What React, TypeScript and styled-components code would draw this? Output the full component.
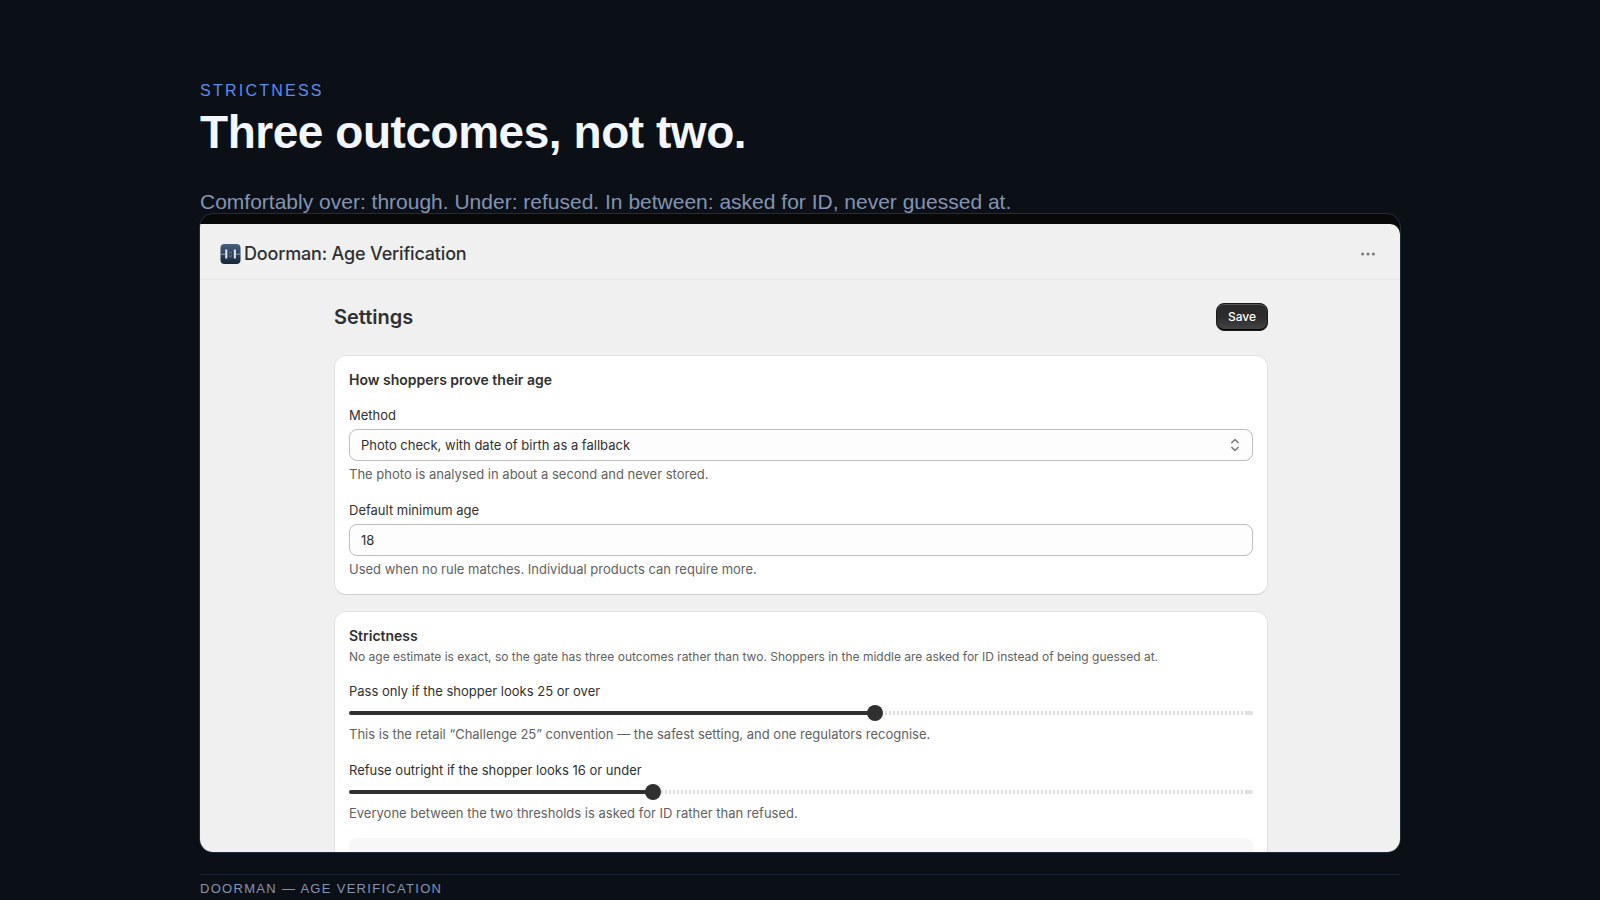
import React, { useId, useState } from "react";
import styled, { createGlobalStyle } from "styled-components";

const GlobalStyle = createGlobalStyle`
  *, *::before, *::after { box-sizing: border-box; }
  body { margin: 0; background: #0b1017; }
`;

const Slide = styled.main`
  display: flex;
  flex-direction: column;
  height: 100vh;
  padding: 81px 12.5% 0;
  overflow: hidden;
  background: #0b1017;
  font-family: "Liberation Sans", Helvetica, Arial, sans-serif;
`;

const Eyebrow = styled.p`
  margin: 0;
  color: #5b8def;
  font-size: 16px;
  line-height: 20px;
  letter-spacing: 0.14em;
  text-transform: uppercase;
`;

const Headline = styled.h1`
  margin: 3px 0 0;
  color: #f3f6fc;
  font-size: 46px;
  line-height: 56px;
  font-weight: 700;
  letter-spacing: -0.01em;
`;

const Lede = styled.p`
  margin: 30px 0 0;
  color: #8494b2;
  font-size: 21px;
  line-height: 23px;
  white-space: nowrap;
`;

const Frame = styled.section`
  display: flex;
  flex-direction: column;
  flex: 1 1 0;
  min-height: 0;
  margin: 0 -1px;
  padding-top: 10px;
  overflow: hidden;
  border: 1px solid #212c3c;
  border-radius: 14px;
  background: #080808;
`;

const Admin = styled.div`
  flex: 1;
  min-height: 0;
  overflow: hidden;
  border-radius: 0 10px 0 0;
  background: #f0f0f0;
  color: #303030;
  font-family: Inter, sans-serif;
`;

const AppBar = styled.header`
  display: flex;
  align-items: center;
  gap: 3px;
  height: 56px;
  padding: 4px 20px 0;
  border-bottom: 1px solid #e8e8e8;
`;

const AppName = styled.h2`
  flex: 1;
  margin: 0;
  font-size: 18px;
  line-height: 24px;
  font-weight: 500;
  letter-spacing: -0.01em;
`;

const MoreButton = styled.button`
  display: flex;
  padding: 4px;
  border: 0;
  background: none;
  cursor: pointer;
`;

const Page = styled.div`
  padding: 23px 132px 0 134px;
`;

const PageHead = styled.div`
  display: flex;
  align-items: center;
  justify-content: space-between;
  height: 28px;
  margin-bottom: 24px;
`;

const PageTitle = styled.h3`
  margin: 0;
  font-size: 20px;
  line-height: 28px;
  font-weight: 600;
`;

const SaveButton = styled.button`
  height: 28px;
  padding: 0 11px;
  border: 1px solid #1a1a1a;
  border-radius: 8px;
  background: linear-gradient(#2b2b2b 50%, #454545);
  box-shadow: inset 0 1px 0 #555, inset 0 -1px 0 #000;
  color: #fff;
  font: 500 12px/16px Inter, sans-serif;
  cursor: pointer;
`;

const Card = styled.section`
  margin-bottom: 16px;
  padding: 15px 14px;
  border: 1px solid #e2e2e2;
  border-bottom-color: #cfcfcf;
  border-radius: 12px;
  background: #fff;
`;

const CardTitle = styled.h4`
  margin: 0;
  font-size: 14px;
  line-height: 18px;
  font-weight: 600;
`;

const CardText = styled.p`
  margin: 4px 0 0;
  color: #616161;
  font-size: 12px;
  line-height: 16px;
`;

const Field = styled.div`
  display: flex;
  flex-direction: column;
  margin-top: 16px;
`;

const Label = styled.label`
  margin-bottom: 4px;
  font-size: 13px;
  line-height: 20px;
`;

const Hint = styled.p`
  margin: 3px 0 0;
  color: #616161;
  font-size: 13px;
  line-height: 20px;
`;

const control = `
  display: block;
  width: 100%;
  height: 32px;
  padding: 0 11px;
  border: 1px solid #bdbdbd;
  border-radius: 8px;
  background: #fdfdfd;
  color: #303030;
  font: 400 13px/20px Inter, sans-serif;
`;

const TextInput = styled.input`${control}`;

const SelectBox = styled.div`
  display: grid;
  align-items: center;
  > * { grid-area: 1 / 1; }
  > svg { justify-self: end; margin-right: 13px; pointer-events: none; }
`;

const Select = styled.select`
  ${control}
  appearance: none;
`;

const Range = styled.input<{ $fill: number }>`
  appearance: none;
  display: block;
  width: 100%;
  height: 16px;
  margin: 0;
  background: none;

  &::-webkit-slider-runnable-track {
    height: 4px;
    border-radius: 2px;
    background:
      linear-gradient(#303030, #303030) 0 0 / ${(p) => p.$fill}% 100% no-repeat,
      linear-gradient(#e0e0e0, #e0e0e0) 100% 0 / 6px 100% no-repeat,
      repeating-linear-gradient(90deg, #e0e0e0 0 2px, #fff 2px 4px);
  }

  &::-webkit-slider-thumb {
    appearance: none;
    width: 16px;
    height: 16px;
    margin-top: -6px;
    border-radius: 50%;
    background: #303030;
  }
`;

const Preview = styled.div`
  height: 120px;
  margin-top: 15px;
  border-radius: 8px;
  background: #f7f7f7;
`;

const Footer = styled.footer`
  height: 26px;
  margin-top: 21px;
  padding-top: 4px;
  border-top: 1px solid #1b2431;
  color: #8494b2;
  font-size: 13px;
  line-height: 20px;
  letter-spacing: 0.1em;
  text-transform: uppercase;
`;

const AppIcon = () => (
  <svg width="21" height="20" viewBox="0 0 21 20" aria-hidden="true">
    <defs>
      <linearGradient id="night" x1="0" y1="0" x2="0" y2="1">
        <stop offset="0" stopColor="#48617f" />
        <stop offset="0.5" stopColor="#2d405a" />
        <stop offset="1" stopColor="#18253a" />
      </linearGradient>
      <linearGradient id="post" x1="0" y1="0" x2="1" y2="0">
        <stop offset="0" stopColor="#8796a6" />
        <stop offset="0.5" stopColor="#f1f4f7" />
        <stop offset="1" stopColor="#b5c0cb" />
      </linearGradient>
    </defs>
    <rect width="20" height="20" x="0.5" rx="4" fill="url(#night)" />
    <path d="M0.5 10.2H5M16 10.2h4.5" stroke="#93a4b7" strokeWidth="1" />
    <rect x="5" y="5.5" width="2.4" height="9" fill="url(#post)" />
    <rect x="13.6" y="5.5" width="2.4" height="9" fill="url(#post)" />
    <rect x="8.9" y="7.5" width="3.2" height="6" rx="1" fill="#53677f" />
    <circle cx="10.5" cy="10.5" r="0.9" fill="#25364d" />
  </svg>
);

const DotsIcon = () => (
  <svg width="16" height="16" viewBox="0 0 16 16" fill="#7d7d7d" aria-hidden="true">
    <circle cx="2.6" cy="8" r="1.6" />
    <circle cx="8" cy="8" r="1.6" />
    <circle cx="13.4" cy="8" r="1.6" />
  </svg>
);

const ChevronsIcon = () => (
  <svg width="10" height="14" viewBox="0 0 10 14" fill="none" stroke="#7d7d7d" strokeWidth="1.5" strokeLinecap="round" strokeLinejoin="round" aria-hidden="true">
    <path d="M1.8 4.6L5 1.5l3.2 3.1M1.8 9.4L5 12.5l3.2-3.1" />
  </svg>
);

type SliderProps = {
  label: (value: number) => string;
  hint: string;
  min: number;
  max: number;
  initial: number;
};

const SliderField = ({ label, hint, min, max, initial }: SliderProps) => {
  const id = useId();
  const [value, setValue] = useState(initial);
  return (
    <Field>
      <Label htmlFor={id}>{label(value)}</Label>
      <Range
        id={id}
        type="range"
        min={min}
        max={max}
        value={value}
        $fill={((value - min) / (max - min)) * 100}
        onChange={(e) => setValue(Number(e.target.value))}
      />
      <Hint>{hint}</Hint>
    </Field>
  );
};

export default function App() {
  return (
    <>
      <GlobalStyle />
      <Slide>
        <Eyebrow>Strictness</Eyebrow>
        <Headline>Three outcomes, not two.</Headline>
        <Lede>Comfortably over: through. Under: refused. In between: asked for ID, never guessed at.</Lede>
        <Frame>
          <Admin>
            <AppBar>
              <AppIcon />
              <AppName>Doorman: Age Verification</AppName>
              <MoreButton type="button" aria-label="More actions">
                <DotsIcon />
              </MoreButton>
            </AppBar>
            <Page>
              <PageHead>
                <PageTitle>Settings</PageTitle>
                <SaveButton type="button">Save</SaveButton>
              </PageHead>
              <Card>
                <CardTitle>How shoppers prove their age</CardTitle>
                <Field>
                  <Label htmlFor="method">Method</Label>
                  <SelectBox>
                    <Select id="method">
                      <option>Photo check, with date of birth as a fallback</option>
                    </Select>
                    <ChevronsIcon />
                  </SelectBox>
                  <Hint>The photo is analysed in about a second and never stored.</Hint>
                </Field>
                <Field>
                  <Label htmlFor="minimum-age">Default minimum age</Label>
                  <TextInput id="minimum-age" inputMode="numeric" defaultValue="18" />
                  <Hint>Used when no rule matches. Individual products can require more.</Hint>
                </Field>
              </Card>
              <Card>
                <CardTitle>Strictness</CardTitle>
                <CardText>
                  No age estimate is exact, so the gate has three outcomes rather than two. Shoppers in the middle are
                  asked for ID instead of being guessed at.
                </CardText>
                <SliderField
                  label={(age) => `Pass only if the shopper looks ${age} or over`}
                  hint="This is the retail “Challenge 25” convention — the safest setting, and one regulators recognise."
                  min={18}
                  max={30}
                  initial={25}
                />
                <SliderField
                  label={(age) => `Refuse outright if the shopper looks ${age} or under`}
                  hint="Everyone between the two thresholds is asked for ID rather than refused."
                  min={12}
                  max={24}
                  initial={16}
                />
                <Preview />
              </Card>
            </Page>
          </Admin>
        </Frame>
        <Footer>Doorman — Age Verification</Footer>
      </Slide>
    </>
  );
}
